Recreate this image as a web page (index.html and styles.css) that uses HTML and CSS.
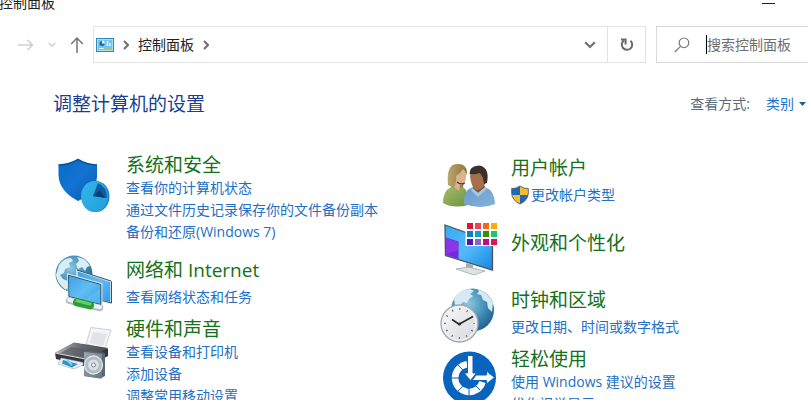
FILE: index.html
```
<!DOCTYPE html>
<html lang="zh-CN">
<head>
    <meta charset="UTF-8">
    <meta name="viewport" content="width=device-width, initial-scale=1.0">
    <title>控制面板</title>
    <link rel="stylesheet" href="styles.css">
</head>
<body>

    <div class="title-bar">
        <span class="window-title">控制面板</span>
        <button class="minimize" aria-label="最小化"></button>
    </div>

    <!-- Navigation -->
    <div class="nav-bar">
        <div class="nav-buttons">
            <button class="nav-button" aria-label="前进">
                <svg width="16" height="16" viewBox="0 0 16 16" fill="none" stroke="#cfcfcf" stroke-width="1.5"><path d="M0 8h14.5M9.5 3l5 5-5 5"/></svg>
            </button>
            <button class="nav-button" aria-label="最近浏览的位置">
                <svg width="8" height="16" viewBox="0 0 8 16" fill="none" stroke="#cfcfcf" stroke-width="1.6"><path d="M.8 6L4 9.2 7.2 6"/></svg>
            </button>
            <button class="nav-button" aria-label="上移">
                <svg width="14" height="18" viewBox="0 0 14 18" fill="none" stroke="#737373" stroke-width="1.5"><path d="M7 17V2M1.2 8L7 2l5.8 6"/></svg>
            </button>
        </div>

        <div class="address-bar">
            <svg class="panel-icon" width="18" height="14" viewBox="0 0 18 14">
                <rect x=".5" y=".5" width="17" height="13" fill="#6fc6f1" stroke="#3487b5"/>
                <rect x="1.5" y="1.5" width="15" height="11" fill="none" stroke="#a5e1fb"/>
                <circle cx="6" cy="5.5" r="2.5" fill="#1668b5"/>
                <path d="M6 5.5V2.6a3 3 0 0 1 2.8 2.9z" fill="#fff"/>
                <path d="M11.5 3v5M14 5v3" stroke="#eaf8ff" stroke-width="1.4"/>
                <path d="M3.5 10.5h4" stroke="#fff"/>
                <path d="M10 10.5h4.5" stroke="#b0c26b"/>
            </svg>
            <svg class="crumb-arrow" width="6" height="10" viewBox="0 0 6 10" fill="none" stroke="#6e6e6e" stroke-width="2"><path d="M1 1l4 4-4 4"/></svg>
            <a class="crumb" href="#">控制面板</a>
            <svg class="crumb-arrow" width="6" height="10" viewBox="0 0 6 10" fill="none" stroke="#6e6e6e" stroke-width="2"><path d="M1 1l4 4-4 4"/></svg>
            <button class="history-button" aria-label="以前的位置">
                <svg width="12" height="8" viewBox="0 0 12 8" fill="none" stroke="#707070" stroke-width="2.2"><path d="M1.2 1.2L6 6l4.8-4.8"/></svg>
            </button>
            <button class="refresh-button" aria-label="刷新">
                <svg width="14" height="14" viewBox="0 0 14 14" fill="none" stroke="#6b6b6b" stroke-width="2"><path d="M10.4 2.7A5.2 5.2 0 1 1 4 2.4"/><path d="M1 1.6h4.6v4.8"/></svg>
            </button>
        </div>

        <div class="search-box">
            <svg width="16" height="16" viewBox="0 0 16 16" fill="none" stroke="#777" stroke-width="1.2"><circle cx="10" cy="5.8" r="4.8"/><path d="M6.5 9.3L.8 15"/></svg>
            <span class="caret"></span>
            <input class="search-input" type="text" aria-label="搜索控制面板" placeholder="搜索控制面板">
        </div>
    </div>

    <div class="page-header">
        <h1 class="page-title">调整计算机的设置</h1>
        <div class="view-by">
            <label for="viewBy">查看方式:</label>
            <select class="view-select" id="viewBy">
                <option>类别</option>
            </select>
            <svg width="7" height="4" viewBox="0 0 7 4"><path d="M0 0h7L3.500 4z" fill="#1a5fa8"/></svg>
        </div>
    </div>

    <!-- Categories -->
    <div class="categories">
        <div class="column">
            <div class="category long">
                <svg class="icon" viewBox="0 0 58 56">
                    <defs>
                        <linearGradient id="shield" x1="0" y1="0" x2="1" y2="1"><stop offset="0" stop-color="#0a6cc4"/><stop offset=".5" stop-color="#1273d2"/><stop offset="1" stop-color="#0858ab"/></linearGradient>
                        <linearGradient id="pie" x1="0" y1="0" x2="1" y2="1"><stop offset="0" stop-color="#35b5e8"/><stop offset="1" stop-color="#1fa0dc"/></linearGradient>
                    </defs>
                    <path d="M4.500 12Q15 12 24 6.500Q33 12 43 12V24Q42 40 24 48Q5 38 4.500 22z" fill="url(#shield)"/>
                    <path d="M4.500 12Q15 12 24 6.500Q33 12 43 12" fill="none" stroke="#0a559f" stroke-width="1.500"/>
                    <ellipse cx="42" cy="43.500" rx="13.500" ry="15.500" fill="#1786c0"/>
                    <ellipse cx="40.500" cy="43.500" rx="13.500" ry="15.500" fill="url(#pie)"/>
                    <path d="M39 43L44 30Q53 34 53 45z" fill="#0d5b9f"/>
                    <path d="M39 43l7-6 5 8z" fill="#073f77"/>
                </svg>
                <div class="info">
                    <h2><a href="#">系统和安全</a></h2>
                    <a href="#">查看你的计算机状态</a>
                    <a href="#">通过文件历史记录保存你的文件备份副本</a>
                    <a href="#">备份和还原(Windows 7)</a>
                </div>
            </div>

            <div class="category">
                <svg class="icon" viewBox="0 0 58 56">
                    <defs>
                        <radialGradient id="globe" cx=".4" cy=".35" r=".7"><stop offset="0" stop-color="#8fc7e2"/><stop offset=".6" stop-color="#3d8ab4"/><stop offset="1" stop-color="#215f8c"/></radialGradient>
                        <linearGradient id="screen" x1="0" y1="0" x2="1" y2="1"><stop offset="0" stop-color="#3ba0e6"/><stop offset=".5" stop-color="#62bdf4"/><stop offset="1" stop-color="#2f98e6"/></linearGradient>
                    </defs>
                    <circle cx="20" cy="19" r="18.500" fill="url(#globe)"/>
                    <path d="M5 10Q10 3 17 3l2 3-4 2 1 4-5 2-1 4-4 2 3 4 5 2 1 5-3 4Q3 29 2 20zM23 2q9 1 13 9l-3 1-2 4-3-4-4 2-2-5 3-3z" fill="#d9edf4"/>
                    <path d="M23 15.500L57 26.500V48L23 39z" fill="url(#screen)" stroke="#d7e6ee" stroke-width="1.600"/>
                    <path d="M57.500 26.500V48L46 45M23 15L57 26" fill="none" stroke="#31566d" stroke-width="1"/>
                    <path d="M14 19.500L47.500 29V50.500L14.500 42z" fill="url(#screen)" stroke="#d5dfe4" stroke-width="2"/>
                    <path d="M14.500 20.300L46.800 29.500V49.500L15 41.500z" fill="none" stroke="#1f5278" stroke-width="1"/>
                    <path d="M30 45L46 34v14.500z" fill="#69c6f5" opacity=".5"/>
                    <path d="M15 45.500L46 53" stroke="#b4bdc2" stroke-width="6.500" stroke-linecap="round"/>
                    <path d="M15 44.800L46 52.300" stroke="#edf1f3" stroke-width="4" stroke-linecap="round"/>
                    <path d="M23 47.300L36 50.400" stroke="#2c9d35" stroke-width="8" stroke-linecap="round"/>
                    <path d="M23 45.800L36 49" stroke="#65cf68" stroke-width="3" stroke-linecap="round"/>
                </svg>
                <div class="info">
                    <h2><a href="#">网络和 Internet</a></h2>
                    <a href="#">查看网络状态和任务</a>
                </div>
            </div>

            <div class="category long">
                <svg class="icon" viewBox="0 0 58 56">
                    <defs>
                        <linearGradient id="lid" x1="0" y1="0" x2="1" y2="0"><stop offset="0" stop-color="#b6b8bb"/><stop offset=".5" stop-color="#66696e"/><stop offset="1" stop-color="#484b50"/></linearGradient>
                        <linearGradient id="speaker" x1="0" y1="0" x2="1" y2="1"><stop offset="0" stop-color="#9aa7b2"/><stop offset="1" stop-color="#687681"/></linearGradient>
                    </defs>
                    <path d="M37 10.500L57 13L51 32L32 27z" fill="#f3f4f6" stroke="#c4c7cb" stroke-width=".8"/>
                    <path d="M39 15l14 2-4 12-13-3z" fill="#e0e3e7"/>
                    <path d="M1 36L20 26L54 31.500V39L34 50L2 42z" fill="#34373c"/>
                    <path d="M1 35.500L20 25.500L54 31L34 42z" fill="url(#lid)"/>
                    <path d="M5 37l12-7 27 4-11 6z" fill="#55585d" opacity=".6"/>
                    <path d="M1 36L34 42.500" stroke="#d8dadd" stroke-width="1.200"/>
                    <path d="M7 41L29 45.500V48L20 52L4 47z" fill="#e6eff6" stroke="#a2abb3" stroke-width=".6"/>
                    <path d="M9 43l15 4-6 3.500L8 46.500z" fill="#2d94cb"/>
                    <path d="M13 43l5 5" stroke="#83d1f0" stroke-width="2"/>
                    <path d="M30 35L33 33.500L51 36V59L46 61.500L30 59z" fill="#5a6772"/>
                    <path d="M30 35L48 37V61.500L30 59z" fill="url(#speaker)"/>
                    <circle cx="39.500" cy="48" r="9" fill="#b2bcc3" stroke="#e0e6e9" stroke-width="1.300"/>
                    <circle cx="39.500" cy="48" r="5.500" fill="#d8dfe3"/>
                    <circle cx="39.500" cy="48" r="2" fill="#eff3f5" stroke="#7f8c96"/>
                </svg>
                <div class="info">
                    <h2><a href="#">硬件和声音</a></h2>
                    <a href="#">查看设备和打印机</a>
                    <a href="#">添加设备</a>
                    <a href="#">调整常用移动设置</a>
                </div>
            </div>
        </div>

        <div class="column">
            <div class="category">
                <svg class="icon" viewBox="0 0 58 56">
                    <defs>
                        <linearGradient id="green" x1="0" y1="0" x2="1" y2="1"><stop offset="0" stop-color="#a3bd6b"/><stop offset="1" stop-color="#6e913e"/></linearGradient>
                        <linearGradient id="blue" x1="0" y1="0" x2="1" y2="1"><stop offset="0" stop-color="#6a9cc9"/><stop offset="1" stop-color="#82b3dc"/></linearGradient>
                        <linearGradient id="hair" x1="0" y1="0" x2="1" y2="0"><stop offset="0" stop-color="#b9a76c"/><stop offset="1" stop-color="#8c7541"/></linearGradient>
                    </defs>
                    <path d="M4 50Q4 38 12 34L24 34Q30 38 29 52Q14 56 4 50z" fill="url(#green)"/>
                    <path d="M9 32Q7 11 18 11Q27 10 28 19L24 34Q15 37 9 32z" fill="url(#hair)"/>
                    <path d="M17 23Q22 20 24 16Q28 19 27 25Q26 32 21 32L20 38L15 34Q18 30 17 23z" fill="#ddb38e"/>
                    <path d="M18 29Q21 32 26 30" fill="none" stroke="#423a36" stroke-width="1.200"/>
                    <path d="M25 51Q24 37 34 34L46 34Q56 38 56 51Q42 57 25 51z" fill="url(#blue)"/>
                    <path d="M35 30H45L46 35L39 40L34 35z" fill="#865535"/>
                    <path d="M31 23Q32 16 40 16Q48 18 47 27Q45 36 38 37Q32 35 31 23z" fill="#a5704b"/>
                    <path d="M30.500 21Q30 13 40 12.500Q51 14 48 30L45 31L44 25L41 20Q35 22 30.500 21z" fill="#3c302a"/>
                    <path d="M33 35L39 40L46 34L48 36L39 44L32 37z" fill="#a2c8e6"/>
                </svg>
                <div class="info">
                    <h2><a href="#">用户帐户</a></h2>
                    <a class="admin-link" href="#">
                        <svg width="18" height="20" viewBox="0 0 18 20">
                            <path d="M9 1Q13 4 17.300 3.500V8Q17 15.500 9 19Q1 15.500 .7 8V3.500Q5 4 9 1z" fill="#f9bd2b"/>
                            <path d="M9 1v9H.8L.7 3.500Q5 4 9 1zM9 10h8.100Q16 16 9 19z" fill="#176ac0"/>
                            <path d="M9 1Q13 4 17.300 3.500V8Q17 15.500 9 19Q1 15.500 .7 8V3.500Q5 4 9 1z" fill="none" stroke="#5d6470"/>
                        </svg>
                        <span>更改帐户类型</span>
                    </a>
                </div>
            </div>

            <div class="category title-only">
                <svg class="icon" viewBox="0 0 58 56">
                    <defs>
                        <linearGradient id="display" x1="0" y1="0" x2="1" y2="1"><stop offset="0" stop-color="#35aaf4"/><stop offset=".5" stop-color="#55bafa"/><stop offset="1" stop-color="#1386e3"/></linearGradient>
                    </defs>
                    <path d="M27 48l7 2v6h-7z" fill="#a5abb2"/>
                    <path d="M17 54l12-2 17 4-11 4z" fill="#dfe2e5" stroke="#a5abb0" stroke-width=".8"/>
                    <path d="M6 10L53.500 27V55L6.500 40.500z" fill="url(#display)" stroke="#48535f" stroke-width="1.300"/>
                    <path d="M7 22.500L19.500 26.500V44L7 40z" fill="#7926dc"/>
                    <path d="M7 23l12.500 4v8L7 39z" fill="#9343e9" opacity=".6"/>
                    <rect x="26.500" y="6" width="33" height="25" fill="#fff"/>
                    <path d="M28 8h6v6h-6z" fill="#dd1537"/><path d="M36 8h6v6h-6z" fill="#ef4655"/><path d="M44 8h6v6h-6z" fill="#f26a11"/><path d="M52 8h6v6h-6z" fill="#fbac0b"/>
                    <path d="M28 16h6v6h-6z" fill="#087fca"/><path d="M36 16h6v6h-6z" fill="#159bc8"/><path d="M44 16h6v6h-6z" fill="#448c05"/><path d="M52 16h6v6h-6z" fill="#11ca72"/>
                    <path d="M28 24h6v6h-6z" fill="#5314af"/><path d="M36 24h6v6h-6z" fill="#8866bd"/><path d="M44 24h6v6h-6z" fill="#c50c7f"/><path d="M52 24h6v6h-6z" fill="#df1557"/>
                </svg>
                <div class="info">
                    <h2><a href="#">外观和个性化</a></h2>
                </div>
            </div>

            <div class="category">
                <svg class="icon" viewBox="0 0 58 56">
                    <defs>
                        <linearGradient id="dial" x1="0" y1="0" x2="1" y2="1"><stop offset="0" stop-color="#fbfbfc"/><stop offset="1" stop-color="#d3d6db"/></linearGradient>
                    </defs>
                    <circle cx="33.500" cy="25" r="21.500" fill="url(#globe)"/>
                    <path d="M15 14Q21 4 31 4l4 2-4 3 3 2-4 3-2 4-4-1-3 4-5-1zM38 4q11 3 16 14l-1 9-4-4-1-6-4-2-2-5-4-1 2-3z" fill="#d6eaf2"/>
                    <circle cx="20.500" cy="38.500" r="18.500" fill="url(#dial)" stroke="#a4a8ae" stroke-width="1.300"/>
                    <circle cx="20.500" cy="38.500" r="16.500" fill="none" stroke="#eff0f2" stroke-width="1.500"/>
                    <circle cx="20.500" cy="38.500" r="14.500" fill="none" stroke="#555b62" stroke-width="2" stroke-dasharray="1 6.590" stroke-dashoffset=".5"/>
                    <path d="M20.500 39.500L13 34.500M19.500 39.500L34 31.500" stroke="#272a2f" stroke-width="1.600"/>
                    <circle cx="20.500" cy="39" r="1.500" fill="#272a2f"/>
                </svg>
                <div class="info">
                    <h2><a href="#">时钟和区域</a></h2>
                    <a href="#">更改日期、时间或数字格式</a>
                </div>
            </div>

            <div class="category long">
                <svg class="icon" viewBox="0 0 58 56">
                    <circle cx="30.500" cy="31" r="26.500" fill="#0964bd"/>
                    <path d="M28 17.200A14 14 0 1 0 43.500 35" fill="none" stroke="#fff" stroke-width="6.500"/>
                    <path d="M19 18l5 5M13 31h7M19 44l5-5M30 49v-8M41 43l-5-5" stroke="#0964bd" stroke-width="1"/>
                    <path d="M28.500 8.500h5.500V26h3.500L31.500 33.500L25 26h3.500z" fill="#fff" stroke="#0964bd" stroke-width="1"/>
                    <path d="M33 33.500L37 28H47.500V24L55.500 30.500L47.500 37V33.500z" fill="#fff" stroke="#0964bd" stroke-width="1"/>
                </svg>
                <div class="info">
                    <h2><a href="#">轻松使用</a></h2>
                    <a href="#">使用 Windows 建议的设置</a>
                    <a href="#">优化视觉显示</a>
                </div>
            </div>
        </div>
    </div>

</body>
</html>
```
FILE: styles.css
```
/* General Styling */
* {
    box-sizing: border-box;
}

body {
    margin: 0;
    height: 100vh;
    overflow: hidden;
    background: #fff;
    color: #222;
    font-family: 'Open Sans', 'Noto Sans CJK SC', sans-serif;
    font-size: 14px;
    line-height: 22px;
}

button {
    display: flex;
    align-items: center;
    justify-content: center;
    padding: 0;
    border: none;
    background: none;
}

a {
    color: #226fc4;
    text-decoration: none;
}

a:hover {
    text-decoration: underline;
}

svg {
    flex: none;
}

/* Title Bar */
.title-bar {
    display: flex;
    align-items: flex-end;
    justify-content: space-between;
    height: 14px;
    padding-right: 33px;
    overflow: hidden;
}

.window-title {
    margin-left: -1px;
}

.minimize {
    width: 13px;
    height: 11px;
    border-top: 1px solid #222;
}

/* Navigation */
.nav-bar {
    display: flex;
    height: 37px;
    margin-top: 12px;
}

.nav-buttons {
    display: flex;
    align-items: center;
    gap: 14px;
    width: 93px;
    padding-left: 18px;
}

.address-bar {
    display: flex;
    flex: 1;
    align-items: center;
    border: 1px solid #e2e2e2;
}

.panel-icon {
    margin-left: 2px;
}

.crumb-arrow {
    margin: 0 9px;
}

.crumb {
    color: #222;
}

.history-button {
    width: 34px;
    height: 100%;
    margin-left: auto;
}

.refresh-button {
    width: 38px;
    height: 100%;
    border-left: 1px solid #e2e2e2;
}

.search-box {
    display: flex;
    align-items: center;
    width: 152px;
    margin-left: 10px;
    padding-left: 17px;
    border: 1px solid #d9d9d9;
    border-right: none;
}

.caret {
    width: 1px;
    height: 19px;
    margin-left: 16px;
    background: #000;
}

.search-input {
    flex: 1;
    min-width: 0;
    padding: 0;
    border: none;
    outline: none;
    background: none;
    font: inherit;
}

.search-input::placeholder {
    color: #6d6d6d;
}

/* Page Header */
.page-header {
    display: flex;
    align-items: center;
    justify-content: space-between;
    margin-top: 29px;
    padding: 0 2px 0 53px;
}

.page-title {
    margin: 0;
    color: #1a3f8f;
    font-size: 19px;
    font-weight: normal;
    line-height: 24px;
}

.view-by {
    display: flex;
    align-items: center;
    color: #5a6b7d;
}

.view-select {
    margin: 0 5px 0 16px;
    padding: 0;
    border: none;
    background: none;
    color: #1a73cf;
    font: inherit;
    appearance: none;
}

/* Categories */
.categories {
    display: grid;
    grid-template-columns: 1fr 1fr;
    gap: 16px;
    margin-top: 37px;
    padding-left: 54px;
}

.column {
    display: flex;
    flex-direction: column;
    gap: 6px;
}

.category {
    display: flex;
    align-items: center;
    gap: 14px;
    min-height: 56px;
}

.icon {
    width: 58px;
    height: 56px;
    overflow: visible;
}

.info {
    display: flex;
    flex-direction: column;
    align-items: flex-start;
    gap: 4px;
    white-space: nowrap;
}

.info h2 {
    margin: 0;
    font-size: 19px;
    font-weight: normal;
    line-height: 24px;
}

.info h2 a {
    color: #13711a;
}

/* Several tasks under one heading */
.long {
    align-items: flex-start;
    padding-bottom: 6px;
}

.long .info {
    gap: 0;
}

.title-only {
    margin-bottom: 8px;
}

.admin-link {
    display: flex;
    align-items: center;
    gap: 2px;
}
```
